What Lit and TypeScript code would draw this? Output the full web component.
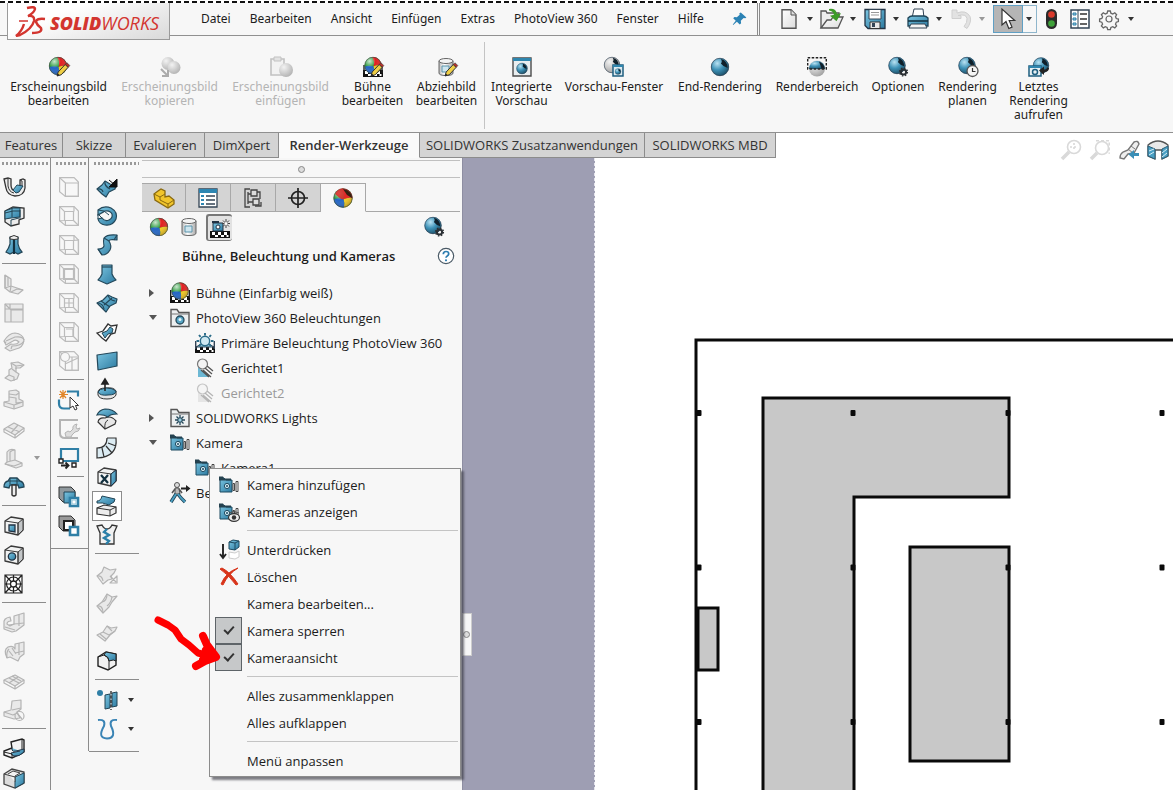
import { LitElement, html, css, svg, SVGTemplateResult } from "lit";
import { customElement, state } from "lit/decorators.js";
import { classMap } from "lit/directives/class-map.js";

type Art = SVGTemplateResult;

/* ---------- shared pieces of icon artwork, drawn on a 20 x 20 grid ---------- */
const ball = (x: number, y: number, r: number): Art => svg`
  <g transform="translate(${x} ${y}) scale(${r})">
    <circle r="1" fill="#2a9b3c"/>
    <path d="M-.1-1Q.25-.4.05.1Q.6-.1 1 0A1 1 0 0 0-.1-1" fill="#e02020"/>
    <path d="M.05.1Q.6-.1 1 0A1 1 0 0 1 .1 1Q.2.5.05.1" fill="#f2c81e"/>
    <path d="M.05.1Q.2.5.1 1A1 1 0 0 1-.98.15Q-.5-.05.05.1" fill="#2265c4"/>
    <circle r="1" fill="url(#shine)"/>
    <circle r=".97" fill="none" stroke="#444" stroke-width=".07"/>
  </g>`;
const orb = (x: number, y: number, r: number, fill = "url(#orb)"): Art => svg`
  <g transform="translate(${x} ${y}) scale(${r})">
    <circle r="1" fill=${fill}/>
    <path d="M.1-.9Q.8-.75.85.1Q.4 0 .1-.4Q.3-.6.1-.9" fill="#10202a"/>
    <circle r=".97" fill="none" stroke="#345" stroke-width=".08"/>
  </g>`;
const pencil = svg`<path d="M8 19l1.200-4 7-7.500 3 2.800-7 7.500z" fill="#f0cf45" stroke="#333" stroke-width="1"/>
  <path d="M16.200 7.500l1.600-1.600q1 0 3 2.800l-1.600 1.600z" fill="#b5312b" stroke="#333" stroke-width=".6"/><path d="M8 19l.8-2.500 1.700 1.600z" fill="#222"/>`;
const gearSmall = (x: number, y: number): Art => svg`<circle cx=${x} cy=${y} r="2.600" fill="none" stroke="#2a2f33" stroke-width="2"/>
  <circle cx=${x} cy=${y} r="3.900" fill="none" stroke="#2a2f33" stroke-width="1.400" stroke-dasharray="1.500 1.560"/>`;
const checker = (y: number): Art => svg`<path d="M0 ${y}h20v7h-20z" fill="#111"/>
  <path d="M2 ${y + 1}h3v3h-3zM8 ${y + 1}h3v3h-3zM14 ${y + 1}h3v3h-3zM5 ${y + 4}h3v2h-3zM11 ${y + 4}h3v2h-3zM16.500 ${y + 4}h2v2h-2z" fill="#fff"/>`;
const can = svg`<path d="M2 4v12q0 2.500 7 2.500t7-2.500v-12" fill="url(#metal)" stroke="#666"/><ellipse cx="9" cy="4" rx="7" ry="2.500" fill="#f4f4f4" stroke="#666"/>
  <path d="M5 9h7v6h-7z" fill="#cfe6ef" stroke="#5b93aa"/>`;
const camera = svg`<path d="M1 3h4l2 2h6v12h-12z" fill="url(#blue)" stroke="#1d4a60"/><path d="M0 1.500h4l1 2h7v2h-12z" fill="#24414f"/>
  <circle cx="8" cy="11" r="2.600" fill="#d8eef6" stroke="#1d4a60"/><circle cx="8" cy="11" r="1" fill="#1d4a60"/>
  <path d="M14 8.500h1.500v7h-1.500zM17 6.500h2v10h-2z" fill="#fff" stroke="#333" stroke-width=".9"/>`;
const folder = svg`<path d="M1 18.500v-17h6l2 3h10v14z" fill="#eceff0" stroke="#555" stroke-width="1.400"/><path d="M1 6h18" stroke="#777"/>`;
const lamp = (c: string): Art => svg`<path d="M3 9v10h11z" fill=${c}/><circle cx="7.500" cy="6" r="5" fill="#f3f3f3" stroke="#777" stroke-width="1.200"/>
  <path d="M8 12l8 7M10 10l7 6M12 8l6 5M6 12l8 7" stroke="#555" stroke-width="1.300"/>`;
const sun = svg`<circle cx="10" cy="8" r="4.700" fill="#cfe8f1" stroke="#2a6b88" stroke-width="1.500"/>
  <path d="M10 0v2.500M4 2l1.600 1.900M16 2l-1.600 1.900M1.500 8h2.500M16 8h2.500M4 13l1.600-1.600M16 13l-1.600-1.600" stroke="#2a6b88" stroke-width="1.900"/>`;
const wire = (front: boolean, extra: string): Art => svg`<g fill="none" stroke="#bcbcbc" stroke-width="1.200">
  <path d="M.6.6h14.500l4.300 4.400v14.400h-13l-5.800-4.600z"/><path d=${front ? "M6.400 6h13v13.400h-13zM.6.6l5.800 5.400" : "M5.500 5.500h9v9h-9zM.6.6l5 5M.6 14.800l5-.3M14.500 14.500l5 5M15 .6v5M6.400 19.400v-5"}/><path d=${extra}/></g>`;
const ghost = (d: string, line = ""): Art => svg`<g stroke="#b4b4b4" stroke-width="1.200" stroke-linejoin="round"><path d=${d} fill="#e9e9e9"/><path d=${line} fill="none"/></g>`;
const blueShape = (d: string, d2 = ""): Art => svg`<g stroke="#24485a" stroke-width="1.200" stroke-linejoin="round"><path d=${d} fill="url(#blue)"/><path d=${d2} fill="none"/></g>`;
const box = svg`<path d="M1 5l6-4 12 2v11l-5 5-13-3z" fill="#f1f2f2" stroke="#3a3a3a" stroke-width="1.300" stroke-linejoin="round"/><path d="M14 7l5-4v11l-5 5z" fill="#c3c6c8" stroke="#3a3a3a"/><path d="M1 5l13 2v12" fill="none" stroke="#3a3a3a"/>`;

const icons: Record<string, Art> = {
  pin: svg`<path d="M11 2l7 6-1.500 1-2-.2-3.500 3.500.4 3-1.700 1.500-3.600-3.300-4.600 4-.5-.5 3.700-4.800-3.200-3.200 1.600-1.500 3 .2 3.500-3-.4-2z" fill="#2b82b4"/>`,
  fresh: svg`<path d="M3 .7h9l5 5v13.600h-14z" fill="url(#paper)" stroke="#555" stroke-width="1.400"/><path d="M12 1v5h5" fill="#ddd" stroke="#555"/>`,
  open: svg`<path d="M-1 19v-17h5l1 2h12v5" fill="#eee" stroke="#555" stroke-width="1.300"/><path d="M-1 19l6-8h4l2-3h10l-5 11z" fill="url(#paper)" stroke="#555" stroke-width="1.300"/><path d="M7 0q7-1 8 5l4-.8-4.500 8-6.500-5.500 4-.9q-1-4-5-4.300z" fill="#3d9a28"/>`,
  save: svg`<path d="M0 .5h20v19h-17l-3-3z" fill="url(#blue)" stroke="#234" stroke-width="1.300"/><path d="M4 .5h12v9.500h-12z" fill="#fff" stroke="#345"/><path d="M6 3.500h8M6 6h8" stroke="#999"/><path d="M5 13h10v6.500h-10z" fill="#e8e8e8" stroke="#333"/><path d="M7 14h3v4h-3z" fill="#345"/>`,
  print: svg`<path d="M4 9l2-9h9l1 9" fill="#fff" stroke="#345"/><path d="M0 9q2-2 4-2h12q2 0 4 2v8h-20z" fill="url(#blue)" stroke="#1f4457" stroke-width="1.300"/><path d="M0 12h20" stroke="#163545" stroke-width="1.600"/><path d="M3 15h14l2 4h-18z" fill="#f4f4f4" stroke="#345"/>`,
  undo: svg`<path d="M1 1v8.500h9v-3h-3q8-2 9 3q.500 4-3 8l3 2q5-7 3-12q-4-7-13-3.500v-3z" fill="#e2e2e2" stroke="#cfcfcf"/>`,
  cursor: svg`<path d="M4 0v16l4-3.500 2.800 7 3.200-1.400-2.800-6.600h5.500z" fill="#fff" stroke="#333" stroke-width="1.200"/>`,
  traffic: svg`<rect x="5" y="0" width="11" height="20" rx="5.500" fill="#2b2b2b"/><circle cx="10.500" cy="5.500" r="3.300" fill="#d93a2c"/><circle cx="10.500" cy="14.500" r="3.300" fill="#3fa23a"/>`,
  props: svg`<path d="M1 1h18v18h-18z" fill="#fff" stroke="#345" stroke-width="1.500"/><path d="M8 1v18" stroke="#345"/><path d="M3 4h3v2h-3zM3 9h3v2h-3zM3 14h3v2h-3z" fill="#9fd0e2" stroke="#2b7fa8"/><path d="M10 5h7M10 10h7M10 15h7" stroke="#333" stroke-width="1.500"/>`,
  gear: svg`<circle cx="10" cy="10" r="3" fill="none" stroke="#666" stroke-width="1.200"/><path d="M8.700 2h2.600l.6 2.200 1.900.8 2-1.200 1.800 1.900-1.100 2 .8 1.800 2.100.6v2.500l-2.100.6-.8 1.900 1.100 1.900-1.800 1.900-2-1.200-1.900.8-.6 2.200h-2.600l-.6-2.200-1.800-.8-2 1.200-1.900-1.900 1.200-1.900-.8-1.900-2.200-.6v-2.500l2.200-.6.8-1.800-1.200-2 1.900-1.900 2 1.200 1.800-.8z" fill="none" stroke="#666" stroke-width="1.300"/>`,
  appEdit: svg`${ball(9, 9, 9)}${pencil}`,
  appCopy: svg`<g opacity=".8"><circle cx="8" cy="6.500" r="6.500" fill="url(#grey)"/><circle cx="14" cy="10.500" r="6.500" fill="url(#grey)"/><path d="M1 12l6 6M8 13v6h-6" fill="none" stroke="#999" stroke-width="2"/></g>`,
  appPaste: svg`<g opacity=".8"><path d="M0 2h13v16h-13z" fill="#f2f2f2" stroke="#b5b5b5" stroke-width="1.600"/><path d="M3 0h7v4h-7z" fill="#ddd" stroke="#b5b5b5"/><circle cx="15" cy="13" r="7" fill="url(#grey)"/></g>`,
  sceneEdit: svg`${checker(13)}<path d="M1 8v8M19 8v8" stroke="#222" stroke-width="1.400"/>${ball(10, 8.5, 8.5)}${pencil}`,
  decalEdit: svg`${can}${pencil}`,
  preview: svg`<path d="M1 1h18v18h-18z" fill="#e9eef0" stroke="#4b4b4b" stroke-width="1.400"/><path d="M1 1h18v3h-18z" fill="#2f86ae"/>${orb(10, 11.5, 5.5)}`,
  previewWin: svg`${orb(8, 8, 8, "url(#grey)")}<path d="M9 8h10v11h-10z" fill="#dceaf0" stroke="#1f5f80" stroke-width="1.500"/><path d="M9 8h10v2h-10z" fill="#2f86ae"/>${orb(14, 14.5, 3)}`,
  render: orb(10, 10, 9),
  region: svg`<circle cx="10" cy="11.500" r="8" fill="url(#grey)"/><path d="M2 12a8 8 0 0 1 16 0z" fill="url(#orb)"/><path d="M12 4.500q5 2 5.500 7h-3z" fill="#10202a"/><path d="M.7.7h18.600v11.300h-18.600z" fill="none" stroke="#222" stroke-width="1.400" stroke-dasharray="2.500 1.500"/>`,
  options: svg`${orb(9, 8.5, 8.5)}${gearSmall(15.5, 15)}`,
  schedule: svg`${orb(9, 8.5, 8.5)}<circle cx="14.500" cy="14" r="5.500" fill="#f5f5f5" stroke="#555" stroke-width="1.300"/><path d="M14.500 11v3.500h3" fill="none" stroke="#333" stroke-width="1.200"/>`,
  last: svg`${orb(12, 8.5, 8)}<path d="M0 9h12v10h-12z" fill="#e8f0f3" stroke="#1f5f80" stroke-width="1.500"/><path d="M0 9h12v2h-12z" fill="#2f86ae"/><circle cx="6" cy="15" r="2.500" fill="none" stroke="#1f5f80" stroke-width="1.500"/><path d="M20 11q0 4-5 4v3l-5-4.500 5-4v3q3 0 3-2z" fill="#222"/>`,
  zoomFit: svg`<g stroke="#d9d9d9" fill="none" stroke-width="1.600"><circle cx="13" cy="7" r="6.500"/><path d="M8 12l-7 7" stroke-width="3.500"/><path d="M13 3v8M9 7h8" stroke-dasharray="2 2"/></g>`,
  zoomArea: svg`<g stroke="#d9d9d9" fill="none" stroke-width="1.600"><circle cx="12" cy="8" r="6.500"/><path d="M7 13l-6 6" stroke-width="3.500"/><path d="M6 .8h13.200v13" stroke-dasharray="3 2"/></g>`,
  prevView: svg`<path d="M1 18q0-4 3-6l5-2 6-8q4-2 5 2l-5 9-6 1-4 5z" fill="#eee" stroke="#777" stroke-width="1.400"/><path d="M9 9l5 4M12 6l4 3" stroke="#777"/><path d="M20 16h-5v3l-5.500-4.500 5.500-4.500v3h5z" fill="#3a8fb7"/>`,
  section: svg`<path d="M0 5q10-8 20 0v11l-6 3v-9h-7v9l-7-3z" fill="#e9e9e9" stroke="#555" stroke-width="1.300"/><path d="M0 6l7 3v10l-7-3zM14 9l6-3v10l-6 3z" fill="#4aa0c4" stroke="#2b5f78"/><path d="M1 11l5-2M1 15l5-3M14 13l5-4M14 17l5-4" stroke="#d9eef6"/>`,

  loftU: svg`<path d="M0 2l4-1 3 1v6q0 5 4 6t5-3v-8l3-1 2 1v8q-1 8-10 8q-8-1-9-8z" fill="#ececec" stroke="#333" stroke-width="1.300"/><path d="M4 1v8q1 6 6 7M16 3l2 1v6" fill="none" stroke="#333"/><path d="M9 13l4-5 6 1-4 6-3 1z" fill="url(#blue)" stroke="#245"/>`,
  revolve: svg`<path d="M1 5l8-4 11 1v10l-5 2v4l-8 2-6-4z" fill="#ececec" stroke="#333" stroke-width="1.300"/><path d="M1 5l8-3h7v9l-9 1-6 1z" fill="url(#blue)" stroke="#245"/><path d="M1 7l8-2h7M8 2v9M16 4v9M7 20v-6l8-2" fill="none" stroke="#245"/>`,
  flare: svg`<path d="M6 2h8v7q1 5 4 8l-4 2-4-2-4 2-4-2q3-4 4-8z" fill="url(#blue)" stroke="#245" stroke-width="1.200"/><path d="M6 2q4-3 8 0v2q-4 1-8 0z" fill="#eee" stroke="#333"/><path d="M10 5v14" stroke="#12303f" stroke-width="2.200"/>`,
  g1: ghost("M1 1l6 4v7l12 4-5 4-8-2-5-4z", "M1 1v13l6-2M4 3v9M7 12l-1 6M19 16l-6-1-6 3"),
  g2: ghost("M1 1h18v18h-18z", "M7 7h12M7 7v12M1 1l6 6M6 1v5h13M1 6h5"),
  g3: ghost("M0 9q5-8 11-8q8 1 9 7q-1 8-8 9l-6 2-5-3 6-4q6 1 8-2q-3-3-6-1l-7 4z", "M2 9l9-4q8-1 9 3M0 9l2 2M7 17l1-3q9 0 12-5"),
  g4: ghost("M7 2l7-1 6 3-4 3-4 0v4l3 2-2 5-6 2-6-3 4-3v-5l3-2z", "M7 2l5 3 8-1M12 5v3M8 8l4 3M5 14l5 2v4"),
  g5: ghost("M5 1l7-1 3 2v7l4 2v5l-9 3-10-3v-4l5-1z", "M5 4l7 1 3-2M5 7l7 1v5l7-1M0 12l10 3 9-3M10 15v4"),
  g6: ghost("M0 10l10-6 10 5-9 7z", "M0 10v3l11 6 9-7v-3M11 16v3M4 8l12 5M14 6l-7 8"),
  g7: ghost("M3 14v-10q3-4 8-2v10l7 3v3l-6 2-11-4z", "M3 14l8-2M1 16l9 2 8-3M6 13v-9q2-2 5-2"),
  tee: svg`<path d="M0 10q0-5 4-6l2-3h7l3 3q4 1 4 6l-5 1-1-3h-8l-1 3z" fill="url(#blue)" stroke="#245" stroke-width="1.300"/><path d="M4 4h12M6 1v6M13 1v6" fill="none" stroke="#245"/><path d="M8 8h4v10q-2 2-4 0z" fill="#eee" stroke="#333" stroke-width="1.400"/>`,
  pocket: svg`${box}<path d="M5 9h6v7l-6-1z" fill="url(#blue)" stroke="#234" stroke-width="1.300"/>`,
  hole: svg`${box}<circle cx="8" cy="11.500" r="3.700" fill="url(#blue)" stroke="#234" stroke-width="1.300"/>`,
  fan: svg`<path d="M1 1h17v18h-17zM1 1l17 18M18 1l-17 18M9.500 1v18M1 10h17" fill="#fff" stroke="#222" stroke-width="1.200"/><circle cx="9.500" cy="10" r="7" fill="none" stroke="#222" stroke-width="1.200"/><circle cx="9.500" cy="10" r="3" fill="#fff" stroke="#222" stroke-width="1.300"/>`,
  g8: ghost("M10 3l10-3v12l-8 6-4 1-8-3v-5q-1-6 6-7l1 4q-4 0-4 3l3 2 4-2z", "M15 2v11M10 11l10-1M1 14l10 3M5 12l6-1"),
  g9: ghost("M11 2l9-2v12l-4 3-2 4-8-4-3 1q-4-8 1-11q5-2 7 2z", "M15 1v12M11 11l9-2M3 16q-1-6 2-9M5 9l4 5M8 6l4 6"),
  g10: ghost("M0 9l11-5 9 5-9 6z", "M0 9v3l11 6 9-6v-3M5 7l10 5M8 5l9 5M11 15v3M5 12l9-6"),
  g11: ghost("M8 1l9-1v9l-4 3 3 6-6 1-10-3v-4l7-2z", "M8 10l9-2M0 12l9 3 4-2M11 16a4 4 0 1 0 9 0a4 4 0 1 0-9 0M13 13l5 6"),
  bend: svg`<path d="M7 3l11-3 2 1v12l-3 2-9 4-8-3v-4l8-3z" fill="#f3f3f3" stroke="#222" stroke-width="1.400"/><path d="M8 9v2q1 2 4 1l8-2v3q-5 5-10 4q-3-1-3-3l9-2" fill="url(#blue)" stroke="#234"/><path d="M0 13l8 2M8 15v4M18 0v10" fill="none" stroke="#222"/>`,
  shell: svg`<path d="M0 6l8-5 12 3v11l-9 5-11-4z" fill="#dcdcdc" stroke="#444" stroke-width="1.300"/><path d="M11 9l9-4v10l-9 5z" fill="url(#blue)" stroke="#245"/><path d="M0 6l11 3M4 6l5-3 7 2-5 3v6" fill="#f3f3f3" stroke="#444"/>`,

  w1: wire(true, ""), w2: wire(false, ""), w3: wire(false, "M14.500 5.500l5-.5v14"), w4: wire(false, "M4.500 4.500h11v11h-11z"),
  w5: wire(false, "M10 5v9M5 10h9"), w6: wire(false, "M7 7h7v7"),
  w7: svg`${wire(true, "")}<circle cx="6" cy="6" r="4.500" fill="#f7f7f7" stroke="#bcbcbc" stroke-width="1.200"/><path d="M13 6v13M6 13l13-6" stroke="#bcbcbc" stroke-width="1.200"/>`,
  sketch: svg`<path d="M8 1.500h11v5M11 18.500h-6q-5 0-5-5v-4" fill="none" stroke="#2f7fa6" stroke-width="2.200"/><path d="M4 0v9M0 4.500h9M1 1l6 7M7 1l-6 7" stroke="#e0862a" stroke-width="1.200"/><path d="M11 7v11l3-2 2 4 2-1-1.500-3.500h3z" fill="#fff" stroke="#333"/>`,
  gw: svg`<path d="M19 1h-18v13q0 5 5 5h13" fill="none" stroke="#b4b4b4" stroke-width="2"/><path d="M7 18l-1-4 3-2 2 1 3-3q-1-4 4-5l-1 3 1 2 3-1q-1 4-5 4l-3 3q0 3-4 2z" fill="#ddd" stroke="#b4b4b4"/>`,
  exchange: svg`<path d="M2 1h17v12h-17z" fill="none" stroke="#2f7fa6" stroke-width="2.200"/><path d="M0 11h4v4h-4z" fill="#fff" stroke="#222" stroke-width="1.400"/><path d="M13 15h4v4h-4z" fill="#fff" stroke="#222" stroke-width="1.400"/><path d="M2 17.500h7M6.500 14.500l3 3-3 3" stroke="#222" stroke-width="1.900" fill="none"/>`,
  layers1: svg`<path d="M0 0h12l4 4v11h-12l-4-4z" fill="#8f989d" stroke="#333"/><path d="M5 5h11v11h-11z" fill="url(#blue)" stroke="#1f4457"/><path d="M11 11h8v8h-8z" fill="#fff" stroke="#2f7fa6" stroke-width="2.600"/><path d="M13 13h4v4h-4z" fill="none" stroke="#8fc3d8"/>`,
  layers2: svg`<path d="M0 0h12l4 4v11h-12l-4-4z" fill="#9a9a9a" stroke="#333"/><path d="M5 5h9v9h-9z" fill="#fff" stroke="#222" stroke-width="2"/><path d="M11 11h8v8h-8z" fill="#fff" stroke="#2f7fa6" stroke-width="2.600"/>`,

  extrude: svg`${blueShape("M0 12l5-4 3-4 5 3 6 1-1 4-6 3-3 5-4-3z", "M0 12q5-1 6 3M8 4q-1 5 5 8")}<path d="M12 3l6 5M20 2v8h-8z" fill="#111" stroke="#111"/>`,
  torus: svg`<path d="M1 4q6-5 13-2q7 4 5 11q-3 7-11 6q-6-1-7-6l4-1q3 4 7 2q4-2 3-6q-2-4-7-3q-5 3-7 4z" fill="url(#blue)" stroke="#24485a" stroke-width="1.200"/><path d="M1 4l6 1 5 4M1 13l0-5 4 4" fill="none" stroke="#24485a"/>`,
  sweep: blueShape("M1 14q5 0 6-3q-1-5 0-8q3-4 13-3v5q-8-1-8 1q3 5 1 9q-3 5-8 5z", "M1 14l4 6M20 0l-3 5M7 3l5 3"),
  loft: blueShape("M5 1h10v9q1 3 4 6l-9 4-9-4q3-3 4-6z", "M5 3h10"),
  patch: blueShape("M0 10l6-3 5-5 4 2 5 2-1 4-6 3-4 6-4-4z", "M4 8l9 6M0 10q6 0 7 6M11 2q1 5 7 6M7 12l8-7"),
  fill: svg`<path d="M0 11l6-2 5-7 3 2 6-1-2 8-4 1-5 7-4-3z" fill="#fff" stroke="#333" stroke-width="1.300"/><path d="M5 11l5-2 3-4 3 2-1 4-4 1-3 4z" fill="url(#blue)" stroke="#245"/>`,
  plane: blueShape("M0 4l20-3v14l-19 4z"),
  offset: svg`<path d="M1 12q0-4 8-4q8-1 10 3v4q-2 4-9 4q-8 0-9-4z" fill="#e4e4e4" stroke="#333"/><path d="M1 12q2 4 10 3q8 0 8-4q-3-3-10-3q-7 1-8 4" fill="url(#blue)" stroke="#245"/><path d="M8 11v-8M5 4l3-5 3 5z" fill="#222" stroke="#222" stroke-width="1.600"/>`,
  thicken: svg`<path d="M1 13q1-5 7-4q6-3 11 3l-1 3-10 5z" fill="#e7e7e7" stroke="#333" stroke-width="1.200"/><path d="M8 20q-1-7 3-9" fill="none" stroke="#333"/><path d="M0 6q2-5 8-6q8 0 12 5q-7 0-9 3q-5-3-11-2z" fill="url(#blue)" stroke="#245" stroke-width="1.200"/>`,
  arc: svg`<path d="M10 0h9q2 19-19 20v-10q10 0 10-10M11 5l8 3M9 8l6 7M5 10l2 9" fill="#dcecf3" stroke="#333" stroke-width="1.200"/>`,
  delFace: svg`${box}<path d="M4 8l7 8M11 8l-7 8" stroke="#12303f" stroke-width="2.200"/><path d="M14 7l5-4v11l-5 5z" fill="url(#blue)" stroke="#234"/>`,
  replace: svg`<path d="M0 12l7-3 12 2v6l-6 3-13-2z" fill="#ededed" stroke="#333" stroke-width="1.200"/><path d="M0 5q4 0 5-5l13 3-1 3-5 3q-7-3-12-2z" fill="url(#blue)" stroke="#245"/><path d="M0 12l13 2v6M13 14l6-3" fill="none" stroke="#333"/>`,
  trim: svg`<path d="M0 1l5-1q2 4 5 4t5-4l5 1-3 7v11h-14v-11z" fill="#f1f1f1" stroke="#333" stroke-width="1.300"/><path d="M10 4l-3 3 5 3-5 3 5 3-3 3" fill="none" stroke="#2b7fa8" stroke-width="2.400"/>`,
  gs1: ghost("M0 12l5-4 2-5 6 3 6-1-2 4-3 3 1 3-4 1-5 4z", "M0 12q5-1 6 5M13 12l6 6M20 12v7h-7z"),
  gs2: ghost("M0 13l5-4 5-8 5 3 5-1-5 6-3 5-6 6z", "M0 13q6-1 6 7M10 1q0 7-5 8M15 4q-1 6-5 9"),
  gs3: ghost("M0 13l6-3 4-6 4 2 6-1-2 4-5 4-5 6z", "M6 10l6 3 6-4M10 4l5 5M3 12l6 5"),
  fillet: svg`<path d="M1 6l8-5 10 2v11l-8 5-10-4z" fill="#f1f1f1" stroke="#222" stroke-width="1.400"/><path d="M9 1l10 2v7q-2-2-7 0q0-4-5-6z" fill="url(#blue)" stroke="#222"/><path d="M1 6l6-2q5 2 5 6v9" fill="none" stroke="#222"/>`,
  mirror: svg`<circle cx="3" cy="3" r="3" fill="#2f7fa6"/><path d="M8 5l5-1v14l-5 1zM15 3l5-1v14l-5 1z" fill="url(#blue)" stroke="#245"/><path d="M14 1v19" stroke="#222" stroke-dasharray="3 1.500" stroke-width="1.300"/>`,
  curve: svg`<path d="M1 1q8-1 6 6q-7 12 3 12.500q10-.5 4-12.500q-2-7 6-6" fill="none" stroke="#3a84b5" stroke-width="2"/>`,

  tabPart: svg`<path d="M0 6l4-3 3-2 4 2v6l4-1 5 4v4l-6 4-13-8z" fill="#f1c52c" stroke="#8a6a10" stroke-width="1.300"/><path d="M0 6l6 3 5-3M6 9v3l8 4 6-4M14 16v4" fill="none" stroke="#8a6a10"/>`,
  tabProps: svg`<path d="M1 1h18v18h-18z" fill="#fff" stroke="#345" stroke-width="1.300"/><path d="M1 1h18v4h-18z" fill="#2d86b2"/><path d="M8 8h9M8 12h9M8 16h9" stroke="#345" stroke-width="1.300"/><path d="M3 7h3v2h-3zM3 11h3v2h-3zM3 15h3v2h-3z" fill="#2d86b2"/>`,
  tabConf: svg`<g fill="#ddd" stroke="#444" stroke-width="1.300"><path d="M7 1h-5v18h5M5 4v12M5 6h4M5 14h5" fill="none"/><path d="M8 2h6v6h-6zM10 11h6v6h-6z"/><path d="M14 4h3v7M12 18h6v-4" fill="none"/></g>`,
  tabTarget: svg`<g fill="none" stroke="#222" stroke-width="1.700"><circle cx="10" cy="10" r="6.500"/><path d="M10 0v20M0 10h20"/></g>`,
  tabBall: svg`${ball(10, 10, 9.5)}<path d="M2 6q3-6 8-5.500l7 9-8 2-3-2z" fill="#e02828" opacity=".85"/><path d="M10 1l4 6 5 3q0-7-9-9z" fill="#321"/>`,
  ball: ball(10, 10, 9),
  can,
  scene: svg`${checker(13)}<path d="M3 5h10v8h-10z" fill="url(#blue)" stroke="#234"/><path d="M2 3h7v2h-7z" fill="#234"/><circle cx="8" cy="9" r="2" fill="#fff" stroke="#234"/><path d="M16 1v9M12 5.500h8M13 2.500l6 6M19 2.500l-6 6" stroke="#444"/><circle cx="16" cy="5.500" r="1.500" fill="#fff"/>`,
  help: svg`<circle cx="10" cy="10" r="8.500" fill="#fff" stroke="#4a5a66" stroke-width="1.300"/><path d="M7 8q0-3 3-3t3 2.500q0 1.500-1.600 2.500-1.400 1-1.400 2" fill="none" stroke="#2d7db0" stroke-width="1.900"/><circle cx="10" cy="14.800" r="1.200" fill="#2d7db0"/>`,
  sceneBall: svg`${checker(13)}<path d="M.7 7v8M19.300 7v8" stroke="#222" stroke-width="1.400"/>${ball(10, 8, 8.5)}`,
  folderOrb: svg`${folder}<circle cx="10" cy="12" r="4" fill="#57a5c4" stroke="#24485a" stroke-width="1.300"/><circle cx="10" cy="11.500" r="1.500" fill="#e8f5fa"/>`,
  envLamp: svg`${checker(13)}<path d="M.7 8v8M19.300 8v8" stroke="#345" stroke-width="1.400"/><path d="M1 14q9-7 18 0z" fill="#8cc5da" stroke="#345"/>${sun}`,
  lamp: lamp("#6db8d4"), lampOff: svg`<g opacity=".4">${lamp("#ccc")}</g>`,
  folderSun: svg`${folder}<path d="M10 7v10M5 12h10M6.500 8.500l7 7M13.500 8.500l-7 7" stroke="#24485a" stroke-width="1.300"/><circle cx="10" cy="12" r="2.200" fill="#9fd0e2" stroke="#24485a"/>`,
  camera,
  walk: svg`<circle cx="7" cy="2" r="2.500" fill="#ddd" stroke="#555"/><path d="M5 5h4l1 6h-5z" fill="#bbb" stroke="#555"/><path d="M2 10l3-4M9 6l3 4" stroke="#555" stroke-width="1.600"/><path d="M6 11l-5 8M8 11l3 4 4 4" fill="none" stroke="#245" stroke-width="3.400"/><path d="M6 11l-5 8M8 11l3 4 4 4" fill="none" stroke="#4aa0c4" stroke-width="1.800"/><path d="M11 4.500h5v-2.500l4.500 3.500-4.500 3.500v-2.500h-5z" fill="#222"/>`,
  cameraShow: svg`${camera}<ellipse cx="15" cy="15.500" rx="5.500" ry="3.800" fill="#eee" stroke="#333" stroke-width="1.200"/><circle cx="15" cy="15.500" r="2.200" fill="#333"/><path d="M10 11q5-3 10 0" fill="none" stroke="#555"/>`,
  suppress: svg`<path d="M4 4v14M1 14l3 4 3-4" fill="none" stroke="#222" stroke-width="1.900"/><path d="M10 2l4-2 6 1v6l-4 3-6-1z" fill="url(#blue)" stroke="#1d4a60"/><path d="M10 2l6 1v7M16 3l4-2" fill="none" stroke="#1d4a60"/><path d="M10 12l6 1 4-2v6l-4 2-6-1z" fill="#fff" stroke="#ccc"/>`,
  remove: svg`<path d="M1 2q8 5 16 16l2-1q-8-12-16-16z" fill="#d8341a" stroke="#d8341a"/><path d="M19 1q-10 6-15 17l-2-1q5-12 17-16z" fill="#d8341a" stroke="#d8341a"/>`,
};

const icon = (name: string) => html`<svg class="ic" viewBox="0 0 20 20" aria-hidden="true">${icons[name]}</svg>`;

const MENU = ["Datei", "Bearbeiten", "Ansicht", "Einfügen", "Extras", "PhotoView 360", "Fenster", "Hilfe"];
const RIBBON: { label: string; icon: string; off?: boolean; sep?: boolean }[] = [
  { label: "Erscheinungsbild\nbearbeiten", icon: "appEdit" },
  { label: "Erscheinungsbild\nkopieren", icon: "appCopy", off: true },
  { label: "Erscheinungsbild\neinfügen", icon: "appPaste", off: true },
  { label: "Bühne\nbearbeiten", icon: "sceneEdit" },
  { label: "Abziehbild\nbearbeiten", icon: "decalEdit", sep: true },
  { label: "Integrierte\nVorschau", icon: "preview" },
  { label: "Vorschau-Fenster", icon: "previewWin" },
  { label: "End-Rendering", icon: "render" },
  { label: "Renderbereich", icon: "region" },
  { label: "Optionen", icon: "options" },
  { label: "Rendering\nplanen", icon: "schedule" },
  { label: "Letztes\nRendering\naufrufen", icon: "last" },
];
const TABS = ["Features", "Skizze", "Evaluieren", "DimXpert", "Render-Werkzeuge", "SOLIDWORKS Zusatzanwendungen", "SOLIDWORKS MBD"];
/* "|" is a divider, a trailing ">" adds a drop-down arrow, a trailing "*" marks the pressed tool */
const SHEET = "loftU revolve flare | g1 g2 g3 g4 g5 g6 g7> tee | pocket hole fan | g8 g9 g10 g11 | bend shell".split(" ");
const VIEWS = "w1 w2 w3 w4 w5 w6 w7 | sketch gw exchange | layers1 layers2".split(" ");
const SURF = "extrude torus sweep loft patch fill plane offset thicken arc delFace replace* trim | gs1 gs2 gs3 fillet | mirror> curve>".split(" ");
const TREE: { label: string; icon: string; child?: boolean; open?: boolean; twisty?: boolean; off?: boolean }[] = [
  { label: "Bühne (Einfarbig weiß)", icon: "sceneBall", twisty: true },
  { label: "PhotoView 360 Beleuchtungen", icon: "folderOrb", twisty: true, open: true },
  { label: "Primäre Beleuchtung PhotoView 360", icon: "envLamp", child: true },
  { label: "Gerichtet1", icon: "lamp", child: true },
  { label: "Gerichtet2", icon: "lampOff", child: true, off: true },
  { label: "SOLIDWORKS Lights", icon: "folderSun", twisty: true },
  { label: "Kamera", icon: "camera", twisty: true, open: true },
  { label: "Kamera1", icon: "camera", child: true },
  { label: "Begehung", icon: "walk" },
];
const CONTEXT: ({ label: string; icon?: string; check?: boolean } | null)[] = [
  { label: "Kamera hinzufügen", icon: "camera" },
  { label: "Kameras anzeigen", icon: "cameraShow" },
  null,
  { label: "Unterdrücken", icon: "suppress" },
  { label: "Löschen", icon: "remove" },
  { label: "Kamera bearbeiten..." },
  { label: "Kamera sperren", check: true },
  { label: "Kameraansicht", check: true },
  null,
  { label: "Alles zusammenklappen" },
  { label: "Alles aufklappen" },
  null,
  { label: "Menü anpassen" },
];

@customElement("app-root")
export class AppRoot extends LitElement {
  @state() private tab = "Render-Werkzeuge";

  static styles = css`
    :host { display: flex; flex-direction: column; height: 100vh; overflow: hidden; position: relative; background: #fff;
      color: #1c1c1c; font: 13px/16px "Open Sans", "Noto Sans", sans-serif; }
    * { box-sizing: border-box; }
    button { font: inherit; color: inherit; background: none; border: 0; padding: 0; margin: 0; }
    ul { list-style: none; margin: 0; padding: 0; }
    .ic { width: 20px; height: 20px; display: block; flex: none; overflow: visible; }
    .defs { position: absolute; width: 0; height: 0; }
    .caret { width: 0; height: 0; border: 3px solid transparent; border-top: 4px solid #333; border-bottom: 0; }
    .caret.pale { border-top-color: #999; }

    .edge { flex: none; height: 2px; margin-top: 1px; background: repeating-linear-gradient(90deg, #111 0 5px, #fff 5px 8px); }
    .title { flex: none; display: flex; height: 33px; background: #f7f7f7; border-bottom: 1px solid #909090; font-family: "Noto Sans", sans-serif; font-size: 12px; }
    .logo { flex: none; display: flex; align-items: center; gap: 4px; width: 163px; height: 37px; margin-left: 7px; padding-left: 6px;
      border: 1px solid #9a9a9a; border-top: 0; position: relative; background: linear-gradient(160deg, #fff 30%, #d9d9d9); color: #d3352f; }
    .mark { width: 32px; height: 31px; flex: none; }
    .brand { font: italic 400 18px/20px "Open Sans", sans-serif; padding-top: 4px; }
    .brand b { font-weight: 800; }
    .menu { display: flex; align-items: center; gap: 19px; padding: 0 9px 0 31px; border-right: 3px double #8c8c8c; }
    .menu .ic { width: 16px; height: 16px; margin: 0 0 0 9px; }
    .quick { display: flex; align-items: center; padding-left: 18px; }
    .quick button { display: flex; align-items: center; justify-content: center; width: 22px; height: 28px; }
    .quick .drop { width: 21px; }
    .quick .picked { width: 30px; border: 1px solid #5f9fc4; background: #b5b5b5; }
    .quick .pickdrop { width: 14px; border: 1px solid #8fb6cc; border-left: 0; }
    .quick .wide { width: 29px; }
    .quick .more { width: 14px; }

    .ribbon { flex: none; display: grid; grid-template-columns: 111px 111px 111px 73px 76px 73px 112px 100px 94px 68px 71px 71px;
      height: 97px; padding: 6px 0 3px 3px; background: #f7f7f7; border-bottom: 1px solid #909090; font: 12px/14px "Noto Sans", sans-serif; }
    .ribbon button { display: flex; flex-direction: column; align-items: center; gap: 3px; padding-top: 15px; white-space: pre; }
    .ribbon .off { color: #b4b4b4; }
    .ribbon .sep { border-right: 1px solid #c4c4c4; }

    .tabrow { flex: none; display: flex; height: 25px; }
    .tabs { display: grid; grid-template-columns: 63px 63px 79px 74px 141px 225px 131px; }
    .tabs button { background: #d4d4d4; border-right: 1px solid #8c8c8c; border-bottom: 1px solid #8c8c8c; color: #333; white-space: nowrap; }
    .tabs .on { background: #fafafa; font-weight: 600; border-bottom-color: #fafafa; }
    .hud { margin-left: auto; display: flex; gap: 9px; padding: 7px 5px 0 0; position: relative; }

    .main { flex: 1; display: flex; min-height: 0; }
    .left { display: flex; flex: none; width: 463px; background: #f7f7f7; border-right: 1px solid #8e8ea2; position: relative; }
    .bar { flex: none; align-self: flex-start; display: flex; flex-direction: column; border-right: 1px solid #8c8c8c; }
    .bar.first { width: 51px; height: 100%; overflow: hidden; }
    .bar.second { width: 38px; border-bottom: 1px solid #8c8c8c; padding-bottom: 8px; }
    .bar.third { width: 50px; border-right: 0; border-bottom: 1px solid #8c8c8c; padding-bottom: 8px; position: relative; }
    .bar.third::before { content: ""; position: absolute; left: -1px; top: 0; bottom: 0; border-left: 1px solid #8c8c8c; }
    .grip { flex: none; height: 3px; margin: 4px 2px 7px; background: repeating-linear-gradient(90deg, #999 0 2px, transparent 2px 4px); }
    .second .grip { margin-left: 5px; }
    .third .grip { margin-left: 5px; margin-right: 0; }
    .bar button { flex: none; height: 29px; display: flex; align-items: center; gap: 10px; padding-left: 4px; }
    .bar.second button { padding-left: 8px; }
    .bar.third button { padding-left: 3px; gap: 6px; }
    .tool span { display: flex; border: 0 solid transparent; }
    .third .tool span { padding: 4px; border-width: 1px; }
    .third .tool .held { border-color: #8c8c8c; background: #fff; }
    .line { flex: none; height: 1px; margin: 4px 4px 5px 2px; background: #8c8c8c; }
    .second .line { margin-left: 6px; }
    .third .line { margin-left: 6px; margin-right: 0; }

    .panel { flex: 1; padding: 2px 2px 0 3px; }
    .split { height: 18px; border: 1px solid #c0c0c0; border-width: 1px 0; display: flex; align-items: center; justify-content: center; }
    .knob { width: 7px; height: 7px; border: 1px solid #888; border-radius: 50%; background: #ddd; }
    .ptabs { display: flex; margin-top: 5px; height: 29px; }
    .ptabs button { width: 45px; display: flex; align-items: center; justify-content: center; border: 1px solid #a8a8a8; border-left: 0; background: #d4d4d4; }
    .ptabs button:first-child { width: 44px; }
    .ptabs .on { background: #f7f7f7; border-bottom-color: transparent; }
    .ptabs i { flex: 1; border-bottom: 1px solid #a8a8a8; }
    .modes { display: flex; align-items: center; height: 30px; gap: 11px; padding: 0 16px 0 7px; }
    .modes .held { display: flex; padding: 2px; margin-left: -5px; border: 2px solid #777; border-right-width: 0; border-bottom-width: 1px; border-radius: 3px; background: #e2e2e2; height: 27px; width: 26px; }
    .push { margin-left: auto; }
    .head { display: flex; align-items: center; height: 28px; padding-left: 20px; }
    .head h2 { flex: 1; margin: 0; padding-left: 20px; font: 600 13px/18px "Open Sans", sans-serif; }
    .head .ic { width: 18px; height: 18px; margin-right: 5px; }
    .tree { padding-top: 10px; }
    .tree li { display: flex; align-items: center; height: 25px; gap: 6px; white-space: nowrap; }
    .tree .child { padding-left: 25px; }
    .tree .off { color: #9a9a9a; }
    .tw { width: 22px; height: 16px; padding-left: 7px; display: flex; align-items: center; }
    .tw i { border: 4px solid transparent; border-left: 5px solid #555; border-right: 0; }
    .tw .open { border: 4px solid transparent; border-top: 5px solid #555; border-bottom: 0; }

    .ctx { position: absolute; left: 209px; top: 310px; width: 252px; padding: 2px 2px 2px 5px; background: #f7f7f7; border: 1px solid #8c8c8c; box-shadow: 3px 3px 2px rgba(60, 60, 70, .65); }
    .ctx li { display: flex; }
    .ctx .row { flex: 1; display: flex; align-items: center; height: 27px; gap: 5px; text-align: left; }
    .slot { width: 27px; display: flex; justify-content: center; }
    .ctx input { appearance: none; flex: none; width: 27px; height: 27px; margin: 0; background: #c6c8c9; border: 1px solid #5e6468; display: flex; align-items: center; justify-content: center; }
    .ctx input:checked::before { content: ""; width: 8px; height: 4px; border: solid #333; border-width: 0 0 2px 2px; transform: rotate(-48deg); margin-top: -4px; }
    .ctx .rule { height: 1px; margin: 5px 0 5px 32px; background: #c4c4c4; }
    .handle { position: absolute; left: 462px; top: 455px; width: 10px; height: 43px; background: #f7f7f7; border: 1px solid #ccc; display: flex; align-items: center; }
    .mark-up { position: absolute; left: 140px; top: 440px; width: 90px; height: 80px; pointer-events: none; }

    .view { flex: 1; min-width: 0; display: flex; background: #fff; }
    .strip { flex: none; width: 132px; background: #9e9eb3; border-right: 1px dashed #e6e6ee; }
    .draw { flex: 1; min-width: 0; height: 100%; display: block; }
  `;

  private bar(list: string[], cls: string) {
    return html`<div class="bar ${cls}"><div class="grip"></div>${list.map((t) => {
      if (t === "|") return html`<div class="line"></div>`;
      const name = t.replace(/[>*]/, "");
      return html`<button class="tool" aria-label=${name}><span class=${classMap({ held: t.endsWith("*") })}>${icon(name)}</span>${
        t.endsWith(">") ? html`<i class=${classMap({ caret: true, pale: name === "g7" })}></i>` : null}</button>`;
    })}</div>`;
  }

  private quick(name: string, pale = false) {
    return html`<button aria-label=${name}>${icon(name)}</button><button class="drop" aria-label="Optionen"><i class=${classMap({ caret: true, pale })}></i></button>`;
  }

  render() {
    const dots = [255, 409.5, 564].flatMap((y) => [104, 258, 413, 567].map((x) => [x, y]));
    return html`
      <svg class="defs" aria-hidden="true"><defs>
        <linearGradient id="blue" x1="0" y1="0" x2="1" y2="1"><stop offset="0" stop-color="#7cc6e2"/><stop offset="1" stop-color="#2c7aa0"/></linearGradient>
        <linearGradient id="paper" x1="0" y1="0" x2="1" y2="1"><stop offset="0" stop-color="#fff"/><stop offset="1" stop-color="#dcdcdc"/></linearGradient>
        <linearGradient id="metal"><stop offset="0" stop-color="#bbb"/><stop offset=".4" stop-color="#fff"/><stop offset="1" stop-color="#aaa"/></linearGradient>
        <radialGradient id="orb" cx=".35" cy=".3" r=".8"><stop offset="0" stop-color="#b9e2f2"/><stop offset=".45" stop-color="#3f93b8"/><stop offset="1" stop-color="#164258"/></radialGradient>
        <radialGradient id="grey" cx=".35" cy=".3" r=".8"><stop offset="0" stop-color="#f2f2f2"/><stop offset="1" stop-color="#9c9c9c"/></radialGradient>
        <radialGradient id="shine" cx=".3" cy=".25" r=".9"><stop offset="0" stop-color="#fff" stop-opacity=".75"/><stop offset=".4" stop-color="#fff" stop-opacity="0"/><stop offset="1" stop-color="#000" stop-opacity=".35"/></radialGradient>
      </defs></svg>

      <div class="edge"></div>
      <header class="title">
        <div class="logo">
          <svg class="mark" viewBox="0 0 32 31" fill="none" stroke="#d3352f" stroke-width="2.400" aria-hidden="true">
            <path d="M13 2q8-2 8 1q-1 4-7 7q7-1 6 5q-2 8-14 14l-4 1q6-5 8-12"/><path d="M5 15l9 0" stroke-width="1.500"/>
            <path d="M31 13q-9-1-9 3q1 3 5 6q2 5-9 5"/>
          </svg>
          <span class="brand"><b>SOLID</b>WORKS</span>
        </div>
        <nav class="menu">${MENU.map((m) => html`<button>${m}</button>`)}<button aria-label="Anheften">${icon("pin")}</button></nav>
        <div class="quick">
          ${this.quick("fresh")}${this.quick("open")}${this.quick("save")}${this.quick("print")}${this.quick("undo", true)}
          <button class="picked" aria-label="Auswählen">${icon("cursor")}</button><button class="pickdrop" aria-label="Auswahl"><i class="caret"></i></button>
          <button class="wide" aria-label="Neuaufbau">${icon("traffic")}</button>
          <button class="wide" aria-label="Eigenschaften">${icon("props")}</button>
          <button class="wide" aria-label="Einstellungen">${icon("gear")}</button><button class="more" aria-label="Weitere"><i class="caret"></i></button>
        </div>
      </header>

      <div class="ribbon">${RIBBON.map((r) => html`<button class=${classMap({ off: !!r.off, sep: !!r.sep })}>${icon(r.icon)}<span>${r.label}</span></button>`)}</div>

      <div class="tabrow">
        <div class="tabs" role="tablist">${TABS.map((t) => html`<button role="tab" class=${classMap({ on: t === this.tab })} @click=${() => (this.tab = t)}>${t}</button>`)}</div>
        <div class="hud">${["zoomFit", "zoomArea", "prevView", "section"].map(icon)}</div>
      </div>

      <div class="main">
        <div class="left">
          ${this.bar(SHEET, "first")}${this.bar(VIEWS, "second")}${this.bar(SURF, "third")}
          <section class="panel">
            <div class="split"><i class="knob"></i></div>
            <div class="ptabs">${["tabPart", "tabProps", "tabConf", "tabTarget", "tabBall"].map((t) => html`<button aria-label=${t} class=${classMap({ on: t === "tabBall" })}>${icon(t)}</button>`)}<i></i></div>
            <div class="modes">
              <button aria-label="Erscheinungsbilder">${icon("ball")}</button><button aria-label="Abziehbilder">${icon("can")}</button>
              <button class="held" aria-label="Bühne">${icon("scene")}</button><button class="push" aria-label="Optionen">${icon("options")}</button>
            </div>
            <div class="head"><h2>Bühne, Beleuchtung und Kameras</h2><button aria-label="Hilfe">${icon("help")}</button></div>
            <ul class="tree">${TREE.map((n) => html`<li class=${classMap({ child: !!n.child, off: !!n.off })}>
              ${n.twisty ? html`<button class="tw" aria-label="Umschalten"><i class=${classMap({ open: !!n.open })}></i></button>` : html`<span class="tw"></span>`}
              ${icon(n.icon)}<span>${n.label}</span></li>`)}</ul>
          </section>
          <div class="handle"><i class="knob"></i></div>
          <ul class="ctx">${CONTEXT.map((c) => c === null ? html`<li class="rule" role="separator"></li>`
            : html`<li>${c.check ? html`<label class="row"><input type="checkbox" checked /><span>${c.label}</span></label>`
              : html`<button class="row"><span class="slot">${c.icon ? icon(c.icon) : null}</span><span>${c.label}</span></button>`}</li>`)}</ul>
          <svg class="mark-up" viewBox="0 0 90 80" fill="none" stroke="#f00" stroke-width="7" stroke-linecap="round" stroke-linejoin="round" aria-hidden="true">
            <path d="M18 22l10 5 7 5 6 9 8 6 9 8 16 4"/><path d="M63 38l4 9 9 12-11 4-9 5M66 52l6 7-9 3" stroke-width="8"/>
          </svg>
        </div>
        <div class="view">
          <div class="strip"></div>
          <svg class="draw" aria-label="Zeichnung">
            <g stroke="#0a0a0a" stroke-width="3">
              <path d="M101 2000v-1818h3000" fill="none"/>
              <path d="M168 2000v-1760h246v99h-155v1661" fill="#c8c8c8"/>
              <path d="M315 389h99v214h-99z" fill="#c8c8c8"/>
              <path d="M103 450h20v62h-20z" fill="#c8c8c8"/>
            </g>
            ${dots.map(([x, y]) => svg`<rect x=${x - 2.5} y=${y - 3} width="5" height="6" rx="1" fill="#0a0a0a"/>`)}
          </svg>
        </div>
      </div>`;
  }
}
